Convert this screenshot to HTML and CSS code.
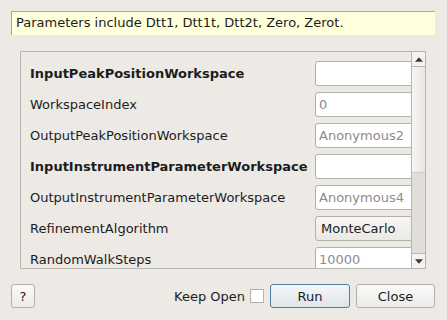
FILE: index.html
```html
<!doctype html>
<html lang="en">
<head>
  <meta charset="UTF-8">
  <title>Algorithm dialog</title>
  <link rel="stylesheet" href="styles.css">
</head>
<body>
  <div class="dialog">
    <div class="info">Parameters include Dtt1, Dtt1t, Dtt2t, Zero, Zerot.</div>

    <div class="scroll-area">
      <div class="viewport">
        <div class="prop-grid">
          <div class="label required">InputPeakPositionWorkspace</div>
          <div class="field"></div>

          <div class="label">WorkspaceIndex</div>
          <div class="field muted">0</div>

          <div class="label">OutputPeakPositionWorkspace</div>
          <div class="field muted">Anonymous2</div>

          <div class="label required">InputInstrumentParameterWorkspace</div>
          <div class="field"></div>

          <div class="label">OutputInstrumentParameterWorkspace</div>
          <div class="field muted">Anonymous4</div>

          <div class="label">RefinementAlgorithm</div>
          <div class="field combo">MonteCarlo</div>

          <div class="label">RandomWalkSteps</div>
          <div class="field muted">10000</div>
        </div>
      </div>
      <div class="vscroll">
        <div class="arrow up">
          <svg viewBox="0 0 7 4"><path d="M0 4 L3.5 0 L7 4 Z"/></svg>
        </div>
        <div class="thumb"></div>
        <div class="track"></div>
        <div class="arrow down">
          <svg viewBox="0 0 7 4"><path d="M0 0 L7 0 L3.5 4 Z"/></svg>
        </div>
      </div>
    </div>

    <div class="footer">
      <button class="btn help">?</button>
      <div class="spacer"></div>
      <label class="keep-open">Keep Open <span class="checkbox"></span></label>
      <button class="btn run">Run</button>
      <button class="btn close">Close</button>
    </div>
  </div>
</body>
</html>
```

FILE: styles.css
```css
:root {
  --bg: #edeae6;
  --text: #1c1c1c;
  --border: #b8b5b0;
}

* {
  box-sizing: border-box;
  margin: 0;
  padding: 0;
}

body {
  font-family: 'DejaVu Sans', 'Liberation Sans', sans-serif;
  font-size: 13px;
  color: var(--text);
  background: var(--bg);
  width: 447px;
  height: 320px;
  overflow: hidden;
}

.dialog {
  padding: 11px 12px 0 11px;
}

.info {
  height: 24px;
  width: 424px;
  background: #ffffdc;
  border-top: 1px solid #a8a6a0;
  border-left: 1px solid #a8a6a0;
  padding-left: 4px;
  line-height: 22px;
}

.scroll-area {
  display: flex;
  margin: 16px 0 0 9px;
  width: 406px;
  height: 218px;
  border: 1px solid var(--border);
}

.viewport {
  flex: 1;
  overflow: hidden;
}

.prop-grid {
  display: grid;
  grid-template-columns: 285px 110px;
  grid-auto-rows: 25px;
  row-gap: 6px;
  padding: 9px 0 0 9px;
}

.label {
  line-height: 25px;
  white-space: nowrap;
}

.label.required {
  font-weight: bold;
}

.field {
  background: #fff;
  border: 1px solid #b3b0aa;
  border-radius: 3px;
  padding-left: 3px;
  line-height: 23px;
  white-space: nowrap;
}

.field.muted {
  color: #8c8c8c;
}

.field.combo {
  background: linear-gradient(#f7f6f5, #ebe9e6);
  padding-left: 5px;
}

.vscroll {
  width: 14px;
  display: flex;
  flex-direction: column;
  border-left: 1px solid var(--border);
}

.arrow {
  height: 15px;
  display: flex;
  align-items: center;
  justify-content: center;
  background: #f4f3f1;
}

.arrow.up {
  border-bottom: 1px solid var(--border);
}

.arrow.down {
  border-top: 1px solid var(--border);
}

.arrow svg {
  width: 8px;
  height: 5px;
  fill: #3a3a3a;
}

.thumb {
  height: 106px;
  background: linear-gradient(90deg, #f6f5f3, #e9e7e4);
  border-bottom: 1px solid #cfccc7;
}

.track {
  flex: 1;
  background: #e0deda;
}

.footer {
  display: flex;
  align-items: center;
  margin-top: 15px;
  height: 24px;
}

.spacer {
  flex: 1;
}

.btn {
  font-family: inherit;
  font-size: 13px;
  color: var(--text);
  height: 24px;
  border: 1px solid #b3b0aa;
  border-radius: 3px;
  background: linear-gradient(#fafafa, #ecebe9);
}

.btn.help {
  width: 24px;
}

.btn.run {
  width: 80px;
  margin-left: 6px;
  border-color: #4d7fa6;
  background: linear-gradient(#f4f6f8, #e0e5ea);
}

.btn.close {
  width: 79px;
  margin-left: 6px;
}

.keep-open {
  display: flex;
  align-items: center;
  gap: 5px;
}

.checkbox {
  width: 14px;
  height: 14px;
  border: 1px solid #b3b0aa;
  background: #fff;
}
```
